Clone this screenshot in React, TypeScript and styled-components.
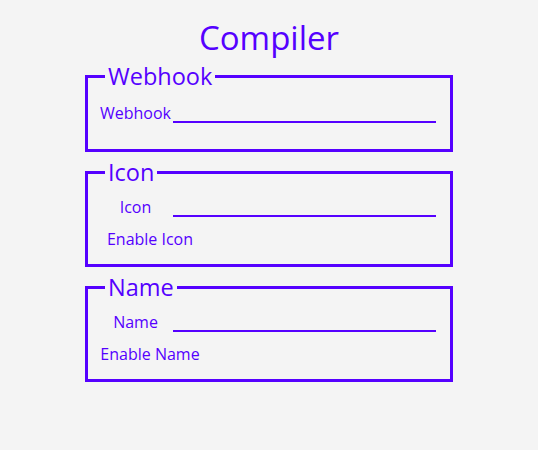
import styled, { createGlobalStyle } from 'styled-components';

const GlobalStyle = createGlobalStyle`
  html, body {
    margin: 0;
    padding: 0;
    background: #f4f4f4;
  }
  body {
    font-family: 'Open Sans', 'Noto Sans', sans-serif;
    color: #5500ff;
  }
`;

const Page = styled.div`
  width: 538px;
  height: 450px;
  display: flex;
  flex-direction: column;
  align-items: center;
`;

const Title = styled.h1`
  margin: 16px 0 2px;
  font-size: 33px;
  font-weight: 400;
  line-height: 44px;
  color: #5500ff;
`;

const Stack = styled.div`
  width: 368px;
  display: flex;
  flex-direction: column;
  gap: 6px;
`;

const Section = styled.fieldset<{ $top: number; $bottom: number }>`
  margin: 0;
  padding: ${({ $top }) => $top}px 13px ${({ $bottom }) => $bottom}px 12px;
  border: 3px solid #5500ff;
  display: flex;
  flex-direction: column;
  gap: 13px;
`;

const Legend = styled.legend`
  margin-left: 5px;
  padding: 0 3px;
  font-size: 23.5px;
  line-height: 28px;
  color: #5500ff;
`;

const Row = styled.div`
  display: grid;
  grid-template-columns: 71px 263px;
  column-gap: 2px;
  align-items: end;
`;

const FieldLabel = styled.label<{ $align?: 'left' | 'center' }>`
  font-size: 16px;
  line-height: 19px;
  text-align: ${({ $align }) => $align ?? 'center'};
  white-space: nowrap;
`;

const LineInput = styled.input`
  box-sizing: border-box;
  width: 100%;
  height: 20px;
  margin: 0;
  padding: 0;
  border: none;
  border-bottom: 2px solid #5500ff;
  background: transparent;
  outline: none;
`;

const Toggle = styled.label`
  width: 100px;
  font-size: 16px;
  line-height: 19px;
  text-align: center;
  white-space: nowrap;
`;

interface Field {
  name: string;
  toggle: boolean;
}

const fields: Field[] = [
  { name: 'Webhook', toggle: false },
  { name: 'Icon', toggle: true },
  { name: 'Name', toggle: true },
];

const App: React.FC = () => {
  return (
    <>
      <GlobalStyle />
      <Page>
        <Title>Compiler</Title>
        <Stack>
          {fields.map((field) => (
            <Section
              key={field.name}
              $top={field.toggle ? 11 : 13}
              $bottom={field.toggle ? 15 : 26}
            >
              <Legend>{field.name}</Legend>
              <Row>
                <FieldLabel $align={field.toggle ? 'center' : 'left'}>{field.name}</FieldLabel>
                <LineInput type="text" />
              </Row>
              {field.toggle && <Toggle>Enable {field.name}</Toggle>}
            </Section>
          ))}
        </Stack>
      </Page>
    </>
  );
};

export default App;
